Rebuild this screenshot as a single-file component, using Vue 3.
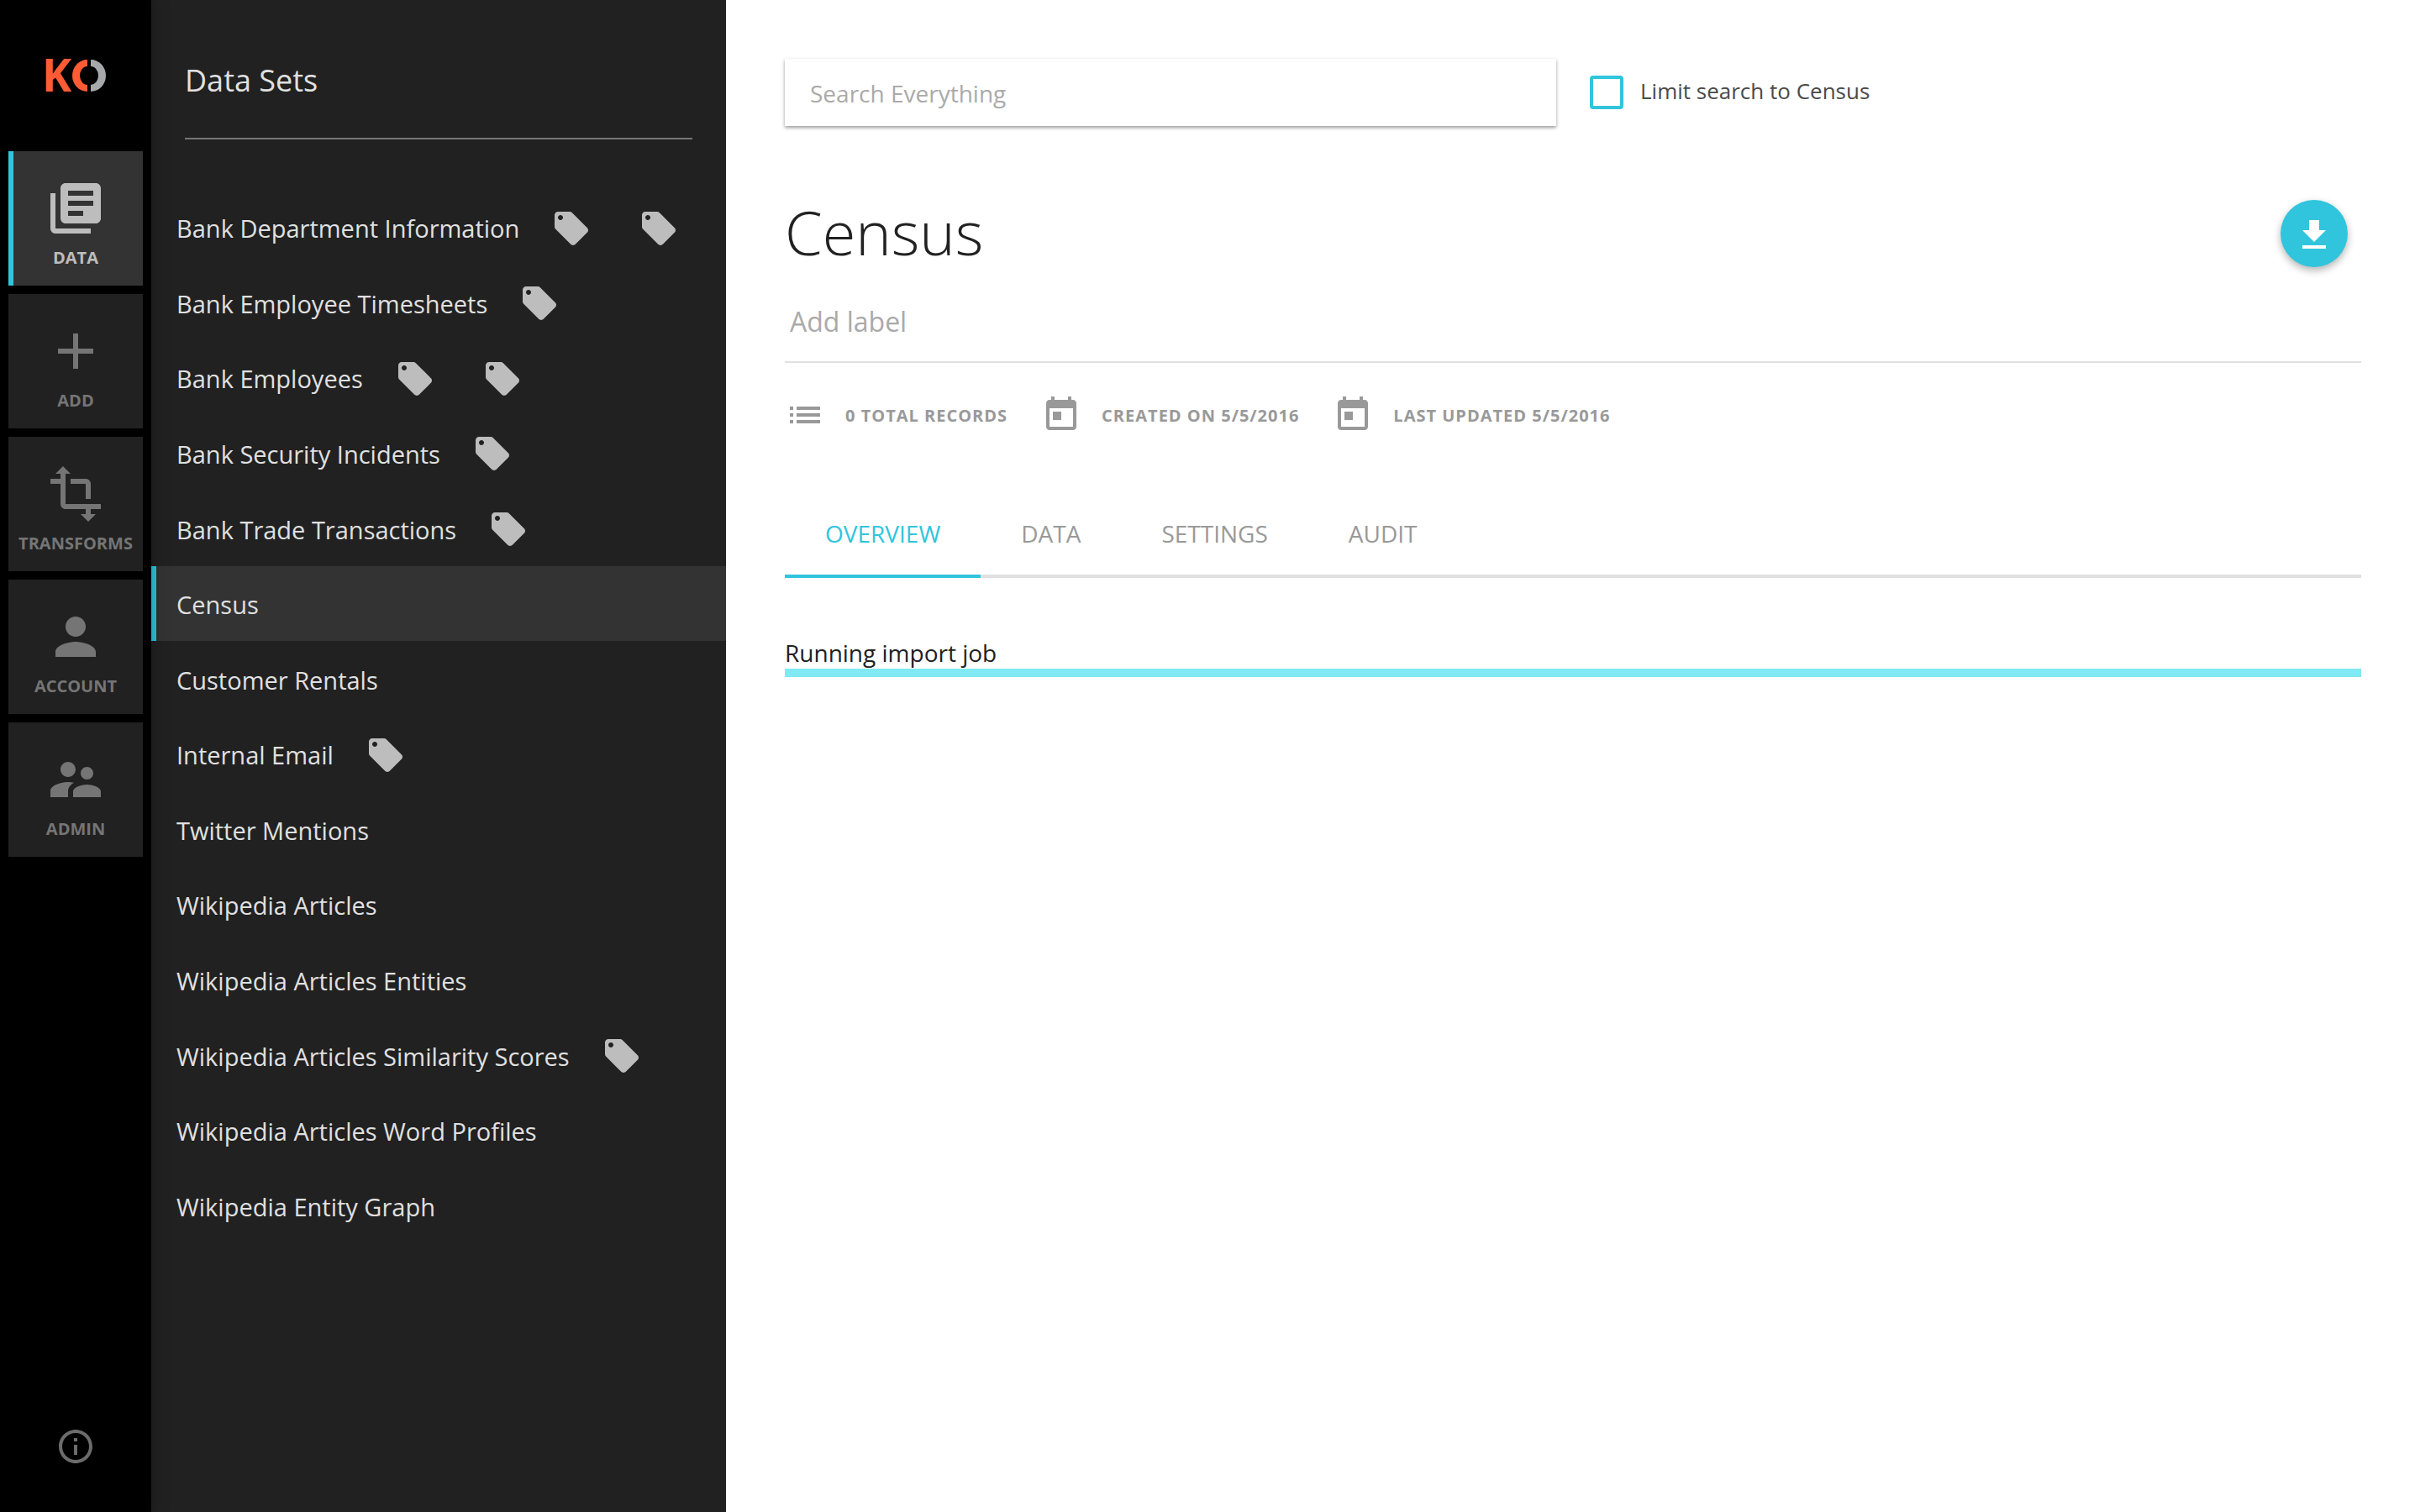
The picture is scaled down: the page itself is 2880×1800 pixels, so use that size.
<script setup>
import { ref } from 'vue'

const icons = {
  library: 'M4 6H2v14c0 1.1.9 2 2 2h14v-2H4V6zm16-4H8c-1.1 0-2 .9-2 2v12c0 1.1.9 2 2 2h12c1.1 0 2-.9 2-2V4c0-1.1-.9-2-2-2zm-1 9H9V9h10v2zm-4 4H9v-2h6v2zm4-8H9V5h10v2z',
  add: 'M19 13h-6v6h-2v-6H5v-2h6V5h2v6h6v2z',
  transforms: 'M22 18v-2H8V4h2L7 1 4 4h2v2H2v2h4v8c0 1.1.9 2 2 2h8v2h-2l3 3 3-3h-2v-2h4zM10 8h6v6h2V8c0-1.1-.9-2-2-2h-6v2z',
  account: 'M12 12c2.21 0 4-1.79 4-4s-1.79-4-4-4-4 1.79-4 4 1.79 4 4 4zm0 2c-2.67 0-8 1.34-8 4v2h16v-2c0-2.66-5.33-4-8-4z',
  admin: 'M16.5 12c1.38 0 2.49-1.12 2.49-2.5S17.88 7 16.5 7C15.12 7 14 8.12 14 9.5s1.12 2.5 2.5 2.5zM9 11c1.66 0 2.99-1.34 2.99-3S10.66 5 9 5C7.34 5 6 6.34 6 8s1.34 3 3 3zm7.5 3c-1.83 0-5.5.92-5.5 2.75V19h11v-2.25c0-1.83-3.67-2.75-5.5-2.75zM9 13c-2.33 0-7 1.17-7 3.5V19h7v-2.25c0-.85.33-2.34 2.37-3.47C10.5 13.1 9.66 13 9 13z',
  tag: 'M21.41 11.58l-9-9C12.05 2.22 11.55 2 11 2H4c-1.1 0-2 .9-2 2v7c0 .55.22 1.05.59 1.42l9 9c.36.36.86.58 1.41.58.55 0 1.05-.22 1.41-.59l7-7c.37-.36.59-.86.59-1.41 0-.55-.23-1.06-.59-1.42zM5.5 7C4.67 7 4 6.33 4 5.5S4.67 4 5.5 4 7 4.67 7 5.5 6.33 7 5.5 7z',
  info: 'M11 17h2v-6h-2v6zm1-15C6.48 2 2 6.48 2 12s4.48 10 10 10 10-4.48 10-10S17.52 2 12 2zm0 18c-4.41 0-8-3.59-8-8s3.59-8 8-8 8 3.59 8 8-3.59 8-8 8zM11 9h2V7h-2v2z',
  list: 'M3 13h2v-2H3v2zm0 4h2v-2H3v2zm0-8h2V7H3v2zm4 4h14v-2H7v2zm0 4h14v-2H7v2zM7 7v2h14V7H7z',
  today: 'M19 3h-1V1h-2v2H8V1H6v2H5c-1.11 0-1.99.9-1.99 2L3 19c0 1.1.89 2 2 2h14c1.1 0 2-.9 2-2V5c0-1.1-.9-2-2-2zm0 16H5V8h14v11zM7 10h5v5H7v-5z',
  download: 'M19 9h-4V3H9v6H5l7 7 7-7zM5 18v2h14v-2H5z'
}

const sections = [
  { icon: 'library', label: 'DATA' },
  { icon: 'add', label: 'ADD' },
  { icon: 'transforms', label: 'TRANSFORMS' },
  { icon: 'account', label: 'ACCOUNT' },
  { icon: 'admin', label: 'ADMIN' }
]

const dataSets = [
  { name: 'Bank Department Information', tags: 2 },
  { name: 'Bank Employee Timesheets', tags: 1 },
  { name: 'Bank Employees', tags: 2 },
  { name: 'Bank Security Incidents', tags: 1 },
  { name: 'Bank Trade Transactions', tags: 1 },
  { name: 'Census', tags: 0 },
  { name: 'Customer Rentals', tags: 0 },
  { name: 'Internal Email', tags: 1 },
  { name: 'Twitter Mentions', tags: 0 },
  { name: 'Wikipedia Articles', tags: 0 },
  { name: 'Wikipedia Articles Entities', tags: 0 },
  { name: 'Wikipedia Articles Similarity Scores', tags: 1 },
  { name: 'Wikipedia Articles Word Profiles', tags: 0 },
  { name: 'Wikipedia Entity Graph', tags: 0 }
]

const facts = [
  { icon: 'list', text: '0 TOTAL RECORDS' },
  { icon: 'today', text: 'CREATED ON 5/5/2016' },
  { icon: 'today', text: 'LAST UPDATED 5/5/2016' }
]

const tabs = ['OVERVIEW', 'DATA', 'SETTINGS', 'AUDIT']

const section = ref('DATA')
const selected = ref('Census')
const tab = ref('OVERVIEW')
const search = ref('')
const label = ref('')
const limit = ref(false)
</script>

<template>
  <div class="app">
    <nav class="rail" aria-label="Sections">
      <a class="logo" href="#" aria-label="Home">
        <svg width="84" height="80" viewBox="-6 -20 84 80">
          <text class="logo-k" x="-4" y="39">K</text>
          <path class="logo-left" d="M50 1A18 19 0 0 0 50 39V31A9 11 0 0 1 50 9Z" />
          <path class="logo-right" d="M54 1A18 19 0 0 1 54 39V31A9 11 0 0 0 54 9Z" />
        </svg>
      </a>
      <a
        v-for="s in sections"
        :key="s.label"
        href="#"
        class="tile"
        :class="{ active: s.label === section }"
        @click.prevent="section = s.label"
      >
        <svg class="icon-large" viewBox="0 0 24 24"><path :d="icons[s.icon]" /></svg>
        <span>{{ s.label }}</span>
      </a>
      <a class="info" href="#" aria-label="About">
        <svg class="icon" viewBox="0 0 24 24"><path :d="icons.info" /></svg>
      </a>
    </nav>

    <aside class="panel">
      <h2>Data Sets</h2>
      <ul>
        <li v-for="d in dataSets" :key="d.name">
          <a
            href="#"
            class="data-set"
            :class="{ active: d.name === selected }"
            @click.prevent="selected = d.name"
          >
            <span>{{ d.name }}</span>
            <span v-if="d.tags" class="tags">
              <svg v-for="n in d.tags" :key="n" class="icon" viewBox="0 0 24 24"><path :d="icons.tag" /></svg>
            </span>
          </a>
        </li>
      </ul>
    </aside>

    <main>
      <form class="search-row" @submit.prevent>
        <input v-model="search" class="search" type="text" placeholder="Search Everything" aria-label="Search Everything" />
        <label class="limit">
          <input v-model="limit" type="checkbox" />
          <span>Limit search to {{ selected }}</span>
        </label>
      </form>

      <header class="title-row">
        <h1>{{ selected }}</h1>
        <button class="download" type="button" aria-label="Download">
          <svg class="icon" viewBox="0 -1 24 24"><path :d="icons.download" /></svg>
        </button>
      </header>

      <input v-model="label" class="add-label" type="text" placeholder="Add label" aria-label="Add label" />

      <ul class="facts">
        <li v-for="f in facts" :key="f.text">
          <svg class="icon" viewBox="0 0 24 24"><path :d="icons[f.icon]" /></svg>
          <span>{{ f.text }}</span>
        </li>
      </ul>

      <div class="tabs" role="tablist">
        <button
          v-for="t in tabs"
          :key="t"
          type="button"
          role="tab"
          :aria-selected="t === tab"
          :class="{ active: t === tab }"
          @click="tab = t"
        >{{ t }}</button>
      </div>

      <section class="job">
        <label for="import-progress">Running import job</label>
        <progress id="import-progress" value="0" max="100"></progress>
      </section>
    </main>
  </div>
</template>

<style>
body {
  background: #fff;
}
</style>

<style scoped>
.app {
  display: flex;
  min-height: 100vh;
  font-family: "Open Sans", "Noto Sans", sans-serif;
  font-size: 28px;
  color: #212121;
}

.app * {
  box-sizing: border-box;
}

a {
  color: inherit;
  text-decoration: none;
}

ul {
  list-style: none;
  margin: 0;
  padding: 0;
}

input,
button {
  font: inherit;
}

svg {
  display: block;
  flex: none;
  fill: currentColor;
}

.icon {
  width: 48px;
  height: 48px;
}

.icon-large {
  width: 72px;
  height: 72px;
}

/* Section rail */
.rail {
  display: flex;
  flex-direction: column;
  flex: none;
  gap: 10px;
  width: 180px;
  padding: 0 10px 54px;
  background: #000;
  color: #757575;
  box-shadow: 0 0 20px rgba(0, 0, 0, 0.3);
  z-index: 1;
}

.logo {
  display: flex;
  align-items: center;
  justify-content: center;
  height: 170px;
  padding-top: 10px;
}

.logo-k {
  font-size: 53px;
  font-weight: 700;
  fill: #ff5c35;
}

.logo-left {
  fill: #ff5c35;
}

.logo-right {
  fill: #a7a8aa;
}

.tile {
  display: flex;
  flex-direction: column;
  align-items: center;
  height: 160px;
  padding-top: 32px;
  background: #212121;
  font-size: 20px;
  font-weight: 700;
  line-height: 46px;
}

.tile.active {
  background: #333;
  color: #bdbdbd;
  box-shadow: inset 6px 0 0 #30c5dd;
}

.info {
  align-self: center;
  margin-top: auto;
  color: #6c6c6c;
}

/* Data set panel */
.panel {
  flex: none;
  width: 684px;
  background: #212121;
  color: #e0e0e0;
}

h2 {
  margin: 0 40px 60px;
  padding: 56px 0 28px;
  border-bottom: 2px solid #757575;
  font-size: 36px;
  font-weight: 400;
  line-height: 80px;
}

.panel ul {
  display: grid;
  grid-auto-rows: 1fr;
  min-height: 1254px;
}

.data-set {
  display: flex;
  align-items: center;
  gap: 38px;
  height: 100%;
  padding: 2px 0 0 30px;
  font-size: 29px;
  white-space: nowrap;
}

.data-set.active {
  background: #333;
  box-shadow: inset 6px 0 0 #30c5dd;
}

.tags {
  display: flex;
  gap: 56px;
  color: #bdbdbd;
}

/* Main area */
main {
  flex: 1;
  min-width: 0;
  padding: 70px;
}

.search-row {
  display: grid;
  grid-template-columns: 1fr 1fr;
  gap: 40px;
}

.search {
  height: 80px;
  padding: 2px 30px 0;
  border: 0;
  background: #fff;
  box-shadow: 0 2px 4px rgba(0, 0, 0, 0.4);
  color: #212121;
}

input::placeholder {
  color: #aaa;
  opacity: 1;
}

.limit {
  display: flex;
  align-items: flex-start;
  gap: 20px;
  padding-top: 20px;
  font-size: 26px;
  line-height: 36px;
  color: #4a4a4a;
}

.limit input {
  appearance: none;
  width: 40px;
  height: 40px;
  margin: 0;
  border: 4px solid #30c5dd;
  border-radius: 4px;
}

.limit input:checked {
  background: #30c5dd;
}

.title-row {
  display: flex;
  align-items: flex-start;
  justify-content: space-between;
  margin-top: 88px;
  padding-right: 16px;
}

h1 {
  margin: 0;
  font-size: 72px;
  font-weight: 300;
  line-height: 76px;
}

.download {
  display: flex;
  align-items: center;
  justify-content: center;
  width: 80px;
  height: 80px;
  padding: 0;
  border: 0;
  border-radius: 50%;
  background: #30c5dd;
  color: #fff;
  box-shadow: 0 4px 10px rgba(0, 0, 0, 0.3);
}

.add-label {
  display: block;
  width: 100%;
  height: 98px;
  margin-top: 16px;
  padding: 0 6px;
  border: 0;
  border-bottom: 2px solid #e0e0e0;
  background: none;
  font-size: 32px;
  color: #212121;
}

.facts {
  display: flex;
  gap: 40px;
  margin-top: 38px;
  color: #999;
  font-size: 20px;
  font-weight: 700;
  letter-spacing: 1px;
}

.facts li {
  display: flex;
  align-items: center;
  gap: 24px;
}

.tabs {
  display: flex;
  margin-top: 68px;
  box-shadow: inset 0 -4px 0 #e0e0e0;
}

.tabs button {
  padding: 0 48px;
  border: 0;
  border-bottom: 4px solid transparent;
  background: none;
  line-height: 98px;
  color: #999;
}

.tabs button.active {
  border-color: #30c5dd;
  color: #30c5dd;
}

.job {
  margin-top: 70px;
  line-height: 38px;
}

.job label,
progress {
  display: block;
}

progress {
  appearance: none;
  width: 100%;
  height: 10px;
  border: 0;
  background: #80e9f4;
}

progress::-webkit-progress-bar {
  background: #80e9f4;
}
</style>
